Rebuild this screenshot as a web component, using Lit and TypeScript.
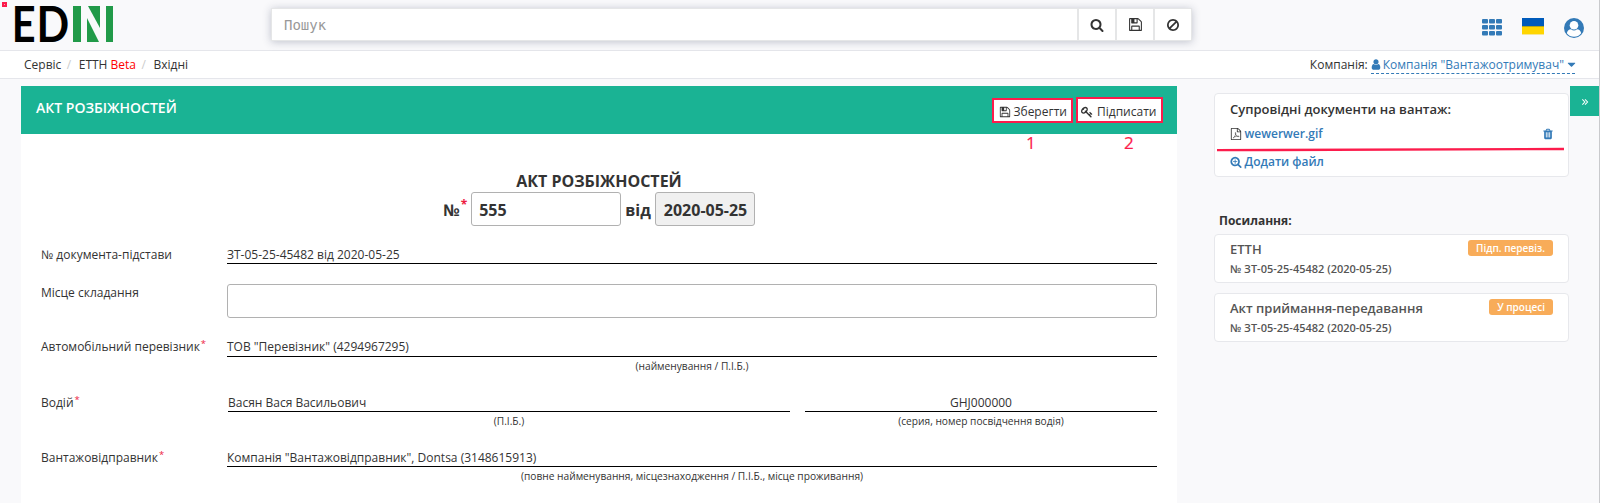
import { LitElement, html, css, svg } from "lit";
import { customElement, property } from "lit/decorators.js";

const SEARCH = "M1216 832q0-185-131.5-316.5t-316.5-131.5-316.5 131.5-131.5 316.5 131.5 316.5 316.5 131.5 316.5-131.5 131.5-316.5zm512 832q0 52-38 90t-90 38q-54 0-90-38l-343-342q-179 124-399 124-143 0-273.5-55.5t-225-150-150-225-55.5-273.5 55.5-273.5 150-225 225-150 273.5-55.5 273.5 55.5 225 150 150 225 55.5 273.5q0 220-124 399l343 343q37 37 37 90z";

const ICONS: Record<string, unknown> = {
  search: svg`<path d=${SEARCH}/>`,
  searchPlus: svg`<path d=${SEARCH}/><path d="M1088 800v64q0 13-9.5 22.5t-22.5 9.5h-224v224q0 13-9.5 22.5t-22.5 9.5h-64q-13 0-22.5-9.5t-9.5-22.5v-224h-224q-13 0-22.5-9.5t-9.5-22.5v-64q0-13 9.5-22.5t22.5-9.5h224v-224q0-13 9.5-22.5t22.5-9.5h64q13 0 22.5 9.5t9.5 22.5v224h224q13 0 22.5 9.5t9.5 22.5z"/>`,
  save: svg`<path d="M512 1536h768v-384h-768v384zm896 0h128v-896q0-14-10-38.5t-20-34.5l-281-281q-10-10-34-20t-39-10v416q0 40-28 68t-68 28h-576q-40 0-68-28t-28-68v-416h-128v1280h128v-416q0-40 28-68t68-28h832q40 0 68 28t28 68v416zm-384-928v-320q0-13-9.5-22.5t-22.5-9.5h-192q-13 0-22.5 9.5t-9.5 22.5v320q0 13 9.5 22.5t22.5 9.5h192q13 0 22.5-9.5t9.5-22.5zm640 32v928q0 40-28 68t-68 28h-1344q-40 0-68-28t-28-68v-1344q0-40 28-68t68-28h928q40 0 88 20t76 48l280 280q28 28 48 76t20 88z"/>`,
  ban: svg`<path d="M1440 893q0-161-87-295l-754 753q137 89 297 89 111 0 211.5-43.5t173.5-116.5 116-174.5 43-212.5zm-999 299l755-754q-135-91-300-91-148 0-273 73t-198 199-73 274q0 162 89 299zm1223-299q0 157-61 300t-163.5 246-245 164-298.5 61-298.5-61-245-164-163.5-246-61-300 61-299.5 163.5-245.5 245-164 298.5-61 298.5 61 245 164 163.5 245.5 61 299.5z"/>`,
  key: svg`<path d="M832 512q0-80-56-136t-136-56-136 56-56 136q0 42 19 83-41-19-83-19-80 0-136 56t-56 136 56 136 136 56 136-56 56-136q0-42-19-83 41 19 83 19 80 0 136-56t56-136zm851 704q0 17-49 66t-66 49q-9 0-28.5-16t-36.5-33-38.5-40-24.5-26l-96 96 220 220q28 28 28 68 0 42-39 81t-81 39q-40 0-68-28l-671-671q-176 131-365 131-163 0-265.5-102.5t-102.5-265.5q0-160 95-313t248-248 313-95q163 0 265.5 102.5t102.5 265.5q0 189-131 365l355 355 96-96q-3-3-26-24.5t-40-38.5-33-36.5-16-28.5q0-17 49-66t66-49q13 0 23 10 6 6 46 44.5t82 79.5 86.5 86 73 78 28.5 41z"/>`,
  user: svg`<path d="M1536 1399q0 109-62.5 187t-150.5 78h-854q-88 0-150.5-78t-62.5-187q0-85 8.5-160.5t31.5-152 58.5-131 94-89 134.5-34.5q131 128 313 128t313-128q76 0 134.5 34.5t94 89 58.5 131 31.5 152 8.5 160.5zm-256-887q0 159-112.5 271.5t-271.5 112.5-271.5-112.5-112.5-271.5 112.5-271.5 271.5-112.5 271.5 112.5 112.5 271.5z"/>`,
  caret: svg`<path d="M1408 704q0 26-19 45l-448 448q-19 19-45 19t-45-19l-448-448q-19-19-19-45t19-45 45-19h896q26 0 45 19t19 45z"/>`,
  trash: svg`<path d="M704 1376v-704q0-14-9-23t-23-9h-64q-14 0-23 9t-9 23v704q0 14 9 23t23 9h64q14 0 23-9t9-23zm256 0v-704q0-14-9-23t-23-9h-64q-14 0-23 9t-9 23v704q0 14 9 23t23 9h64q14 0 23-9t9-23zm256 0v-704q0-14-9-23t-23-9h-64q-14 0-23 9t-9 23v704q0 14 9 23t23 9h64q14 0 23-9t9-23zm-544-992h448l-48-117q-7-9-17-11h-317q-10 2-17 11zm928 32v64q0 14-9 23t-23 9h-96v948q0 83-47 143.5t-113 60.5h-832q-66 0-113-58.5t-47-141.5v-952h-96q-14 0-23-9t-9-23v-64q0-14 9-23t23-9h309l70-167q15-37 54-63t79-26h320q40 0 79 26t54 63l70 167h309q14 0 23 9t9 23z"/>`,
  pdf: svg`<path d="M1596 380q28 28 48 76t20 88v1152q0 40-28 68t-68 28h-1344q-40 0-68-28t-28-68v-1600q0-40 28-68t68-28h896q40 0 88 20t76 48zm-444-244v376h376q-10-29-22-41l-313-313q-12-12-41-22zm384 1528v-1024h-416q-40 0-68-28t-28-68v-416h-768v1536h1280z"/><path d="M480 1480q190-110 320-420 90-260 40-380-60-30-50 90 50 330 290 470 140 80 290 30-60-110-400-30-330 70-490 240z" fill="none" stroke="currentColor" stroke-width="80"/>`,
  raquo: svg`<path d="M300 330l566 566-566 566M900 330l566 566-566 566" fill="none" stroke="currentColor" stroke-width="230"/>`,
};

@customElement("ui-icon")
class UiIcon extends LitElement {
  @property() name = "search";
  static styles = css`
    :host { display: inline-block; width: 12px; height: 12px; flex: none; }
    svg { display: block; width: 100%; height: 100%; fill: currentColor; overflow: visible; }
  `;
  render() {
    return html`<svg viewBox="0 0 1792 1792">${ICONS[this.name]}</svg>`;
  }
}

@customElement("app-root")
class AppRoot extends LitElement {
  static styles = css`
    :host {
      display: block; position: relative; height: 503px; overflow: hidden;
      box-sizing: border-box; border-right: 1px solid #c9cacd;
      background: #f9f9fb; color: #333; font: 12px/18px "Open Sans", sans-serif;
    }
    * { box-sizing: border-box; }
    .top { height: 51px; border-bottom: 1px solid #e5e6eb; display: flex; }
    .logo { width: 100px; height: 38px; margin: 5px 0 0 15px; overflow: visible; }
    .search { margin: 8px 0 0 156px; width: 921px; height: 33px; display: flex; background: #fff; box-shadow: 0 1px 8px rgba(60,70,100,.3); }
    .query { width: 807px; padding: 7px 12px; border: 1px solid #e5e6e7; color: #999; font: 14px/18px "DejaVu Sans Mono", monospace; }
    .sbtn { flex: 1; display: flex; align-items: center; justify-content: center; border: 1px solid #e5e6e7; }
    .big { width: 15px; height: 15px; }
    .mid { width: 14px; height: 14px; }
    .tools { margin-left: auto; display: flex; padding: 18px 15px 0 0; color: #337ab7; }
    .grid { width: 20px; height: 18px; }
    .flag { width: 22px; height: 17px; margin: 0 20px; background: linear-gradient(#005bbb 0 8px, #b3a51b 8px 9px, #ffd500 9px 16px, #f6e695 16px); }
    .avatar { width: 20px; height: 20px; }
    .crumbs { height: 28px; background: #fff; border-bottom: 1px solid #e5e6eb; display: flex; padding: 5px 24px 0 24px; }
    .sep { color: #ccc; padding: 0 7.5px 0 5.5px; }
    .beta { color: #f00; }
    .company { margin-left: auto; display: flex; gap: 3px; }
    .pick { display: flex; align-items: center; height: 18px; color: #337ab7; border-bottom: 1px dashed #337ab7; }
    .person { width: 12px; height: 13px; margin: 0 1px 0 -1px; }
    .caret { width: 13px; height: 13px; margin: 0 -3px 0 1px; }
    .main { display: flex; padding: 7px 0 0 21px; align-items: flex-start; }
    .panel { width: 1156px; height: 430px; background: #fff; }
    .bar { height: 48px; background: #1ab394; color: #fff; padding: 12px 14px 0 15px; display: flex; justify-content: space-between; font-size: 14px; line-height: 20px; font-weight: 600; }
    .acts { display: flex; gap: 3px; }
    .act { height: 25px; border: 2px solid #fc1c4c; background: #fff; color: #333; display: flex; align-items: center; font-size: 12px; font-weight: 400; }
    .save { width: 81px; gap: 2.5px; padding: 2px 0 0 5px; }
    .sign { width: 87px; gap: 4px; padding: 3px 0 0 3px; height: 26px; margin-top: -1px; }
    .title { margin: 36px 0 0; text-align: center; font-weight: 700; font-size: 16px; line-height: 22px; }
    .num { display: flex; justify-content: center; height: 34px; font-size: 16px; line-height: 36px; font-weight: 700; white-space: nowrap; }
    .num .star { line-height: 26px; margin: 0 4px 0 1px; font-size: 12px; }
    .box { height: 34px; border: 1px solid #b1b1b1; border-radius: 3px; padding: 0 7px; line-height: 34px; background: #fff; }
    .number { width: 150px; margin-right: 4px; }
    .date { width: 100px; margin-left: 4px; padding-left: 8px; background: #f0f0f0; }
    .star { color: #ed1c3f; }
    .form { padding: 19px 20px 0; }
    .row { display: flex; height: 55px; line-height: 20px; }
    .basis { height: 39px; }
    .place { height: 53px; line-height: 18px; }
    .carrier { height: 56px; }
    .carrier .val { height: 20px; }
    .label { width: 186px; flex: none; white-space: nowrap; }
    .label .star { font-size: 9.5px; vertical-align: 4px; line-height: 0; margin-left: 1px; }
    .cell { flex: 1; min-width: 0; }
    .driver { width: 562px; margin: 0 15px 0 1px; }
    .center { text-align: center; }
    .val { border-bottom: 1px solid #000; height: 19px; white-space: nowrap; }
    .hint { font-size: 10.2px; line-height: 18px; text-align: center; }
    .side { width: 355px; margin: 7px 0 0 37px; }
    .card { border: 1px solid #e7e8ec; border-radius: 4px; background: #fff; padding: 0 15px; }
    .docs { height: 84px; padding-top: 6px; font-weight: 600; }
    .heading { font-size: 13px; }
    .line { display: flex; align-items: center; gap: 2.5px; color: #337ab7; margin-top: 7px; }
    .line + .line { margin-top: 10px; }
    .pdf { color: #333; }
    .trash { margin-left: auto; width: 12px; height: 12px; margin-right: -1px; }
    .links { margin: 35px 0 4px 5px; font-weight: 700; }
    .ref { height: 49px; margin-bottom: 10px; padding-top: 5px; display: flex; justify-content: space-between; font-weight: 600; font-size: 13px; color: #555; }
    .small { font-size: 11px; line-height: 21px; }
    .tag { background: #f8ac59; color: #fff; border-radius: 3px; height: 16px; padding: 0 8px; font-size: 10px; line-height: 16px; }
    .toggle { position: absolute; right: 0; top: 86px; width: 29px; height: 30px; background: #1ab394; color: #fff; display: flex; align-items: center; justify-content: center; }
    .chev { width: 8px; height: 8px; margin-top: 2px; }
    .mark { position: absolute; color: #fc1c4c; font-size: 17px; line-height: 20px; -webkit-text-stroke: .2px #fc1c4c; }
    .one { left: 1026px; top: 133px; }
    .two { left: 1124px; top: 133px; }
    .rule { position: absolute; left: 1217px; top: 146px; width: 348px; height: 6px; }
    .dot { position: absolute; left: 2px; top: 2px; width: 5px; height: 5px; border: 2px solid #fc1c4c; background: #f8a6b8; }
  `;

  private label(text: string, star: boolean) {
    return html`<div class="label">${text}${star ? html`<span class="star">*</span>` : ""}</div>`;
  }

  private field(cls: string, label: string, star: boolean, value: string, hint: string) {
    return html`<div class="row ${cls}">${this.label(label, star)}
      <div class="cell"><div class="val">${value}</div><div class="hint">${hint}</div></div></div>`;
  }

  private link(name: string, tag: string) {
    return html`<div class="card ref"><div><div>${name}</div><div class="small">№ ЗТ-05-25-45482 (2020-05-25)</div></div><span class="tag">${tag}</span></div>`;
  }

  render() {
    return html`
      <header class="top">
        <svg class="logo" viewBox="0 0 100 38">
          <g font-family="Lato" font-weight="700" font-size="50" fill="#000">
            <text transform="translate(-3.2 37) scale(.83 1)">E</text>
            <text transform="translate(21.6 37) scale(.86 1)">D</text>
          </g>
          <g fill="#219a49">
            <rect x="58" y="1" width="8" height="36"/><rect x="91" y="1" width="7" height="36"/>
            <polygon points="72,13 84,37 72,37"/><polygon points="73,1 85,1 85,23"/>
          </g>
        </svg>
        <div class="search">
          <div class="query">Пошук</div>
          <div class="sbtn"><ui-icon class="mid" name="search"></ui-icon></div>
          <div class="sbtn"><ui-icon class="big" name="save"></ui-icon></div>
          <div class="sbtn"><ui-icon class="mid" name="ban"></ui-icon></div>
        </div>
        <div class="tools">
          <svg class="grid" viewBox="0 0 20 18" fill="currentColor">
            ${[1, 7, 13].map(y => [0, 7, 14].map(x => svg`<rect x=${x} y=${y} width="6" height="4.5" rx="1"/>`))}
          </svg>
          <div class="flag"></div>
          <svg class="avatar" viewBox="0 0 20 20">
            <circle cx="10" cy="10" r="10" fill="#337ab7"/>
            <path d="M2.8 15.2Q3.8 11.4 7 11.2Q10 13.8 13 11.2Q16.2 11.4 17.2 15.2Q14.4 18.7 10 18.7Q5.6 18.7 2.8 15.2z" fill="#fff"/>
            <circle cx="10" cy="7.3" r="4.3" fill="#fff"/>
          </svg>
        </div>
      </header>
      <nav class="crumbs">
        <span>Сервіс</span><span class="sep">/</span><span>ЕТТН <span class="beta">Beta</span></span><span class="sep">/</span><span>Вхідні</span>
        <div class="company"><span>Компанія:</span><span class="pick"><ui-icon class="person" name="user"></ui-icon>Компанія "Вантажоотримувач"<ui-icon class="caret" name="caret"></ui-icon></span></div>
      </nav>
      <div class="main">
        <section class="panel">
          <div class="bar"><span>АКТ РОЗБІЖНОСТЕЙ</span>
            <div class="acts">
              <div class="act save"><ui-icon name="save"></ui-icon>Зберегти</div>
              <div class="act sign"><ui-icon name="key"></ui-icon>Підписати</div>
            </div>
          </div>
          <div class="title">АКТ РОЗБІЖНОСТЕЙ</div>
          <div class="num">№<span class="star">*</span><div class="box number">555</div>від<div class="box date">2020-05-25</div></div>
          <div class="form">
            ${this.field("basis", "№ документа-підстави", false, "ЗТ-05-25-45482 від 2020-05-25", "")}
            <div class="row place">${this.label("Місце складання", false)}<div class="cell box"></div></div>
            ${this.field("carrier", "Автомобільний перевізник", true, "ТОВ \"Перевізник\" (4294967295)", "(найменування / П.І.Б.)")}
            <div class="row">${this.label("Водій", true)}
              <div class="driver"><div class="val">Васян Вася Васильович</div><div class="hint">(П.І.Б.)</div></div>
              <div class="cell center"><div class="val">GHJ000000</div><div class="hint">(серия, номер посвідчення водія)</div></div>
            </div>
            ${this.field("", "Вантажовідправник", true, "Компанія \"Вантажовідправник\", Dontsa (3148615913)", "(повне найменування, місцезнаходження / П.І.Б., місце проживання)")}
          </div>
        </section>
        <aside class="side">
          <div class="card docs"><div class="heading">Супровідні документи на вантаж:</div>
            <div class="line"><ui-icon class="pdf" name="pdf"></ui-icon>wewerwer.gif<ui-icon class="trash" name="trash"></ui-icon></div>
            <div class="line"><ui-icon name="searchPlus"></ui-icon>Додати файл</div></div>
          <div class="links">Посилання:</div>
          ${this.link("ЕТТН", "Підп. перевіз.")}
          ${this.link("Акт приймання-передавання", "У процесі")}
        </aside>
      </div>
      <div class="toggle"><ui-icon class="chev" name="raquo"></ui-icon></div>
      <span class="mark one">1</span><span class="mark two">2</span>
      <svg class="rule" viewBox="0 0 348 6"><path d="M0 4.2L347 3" stroke="#fc1c4c" stroke-width="2.3"/></svg>
      <div class="dot"></div>
    `;
  }
}
